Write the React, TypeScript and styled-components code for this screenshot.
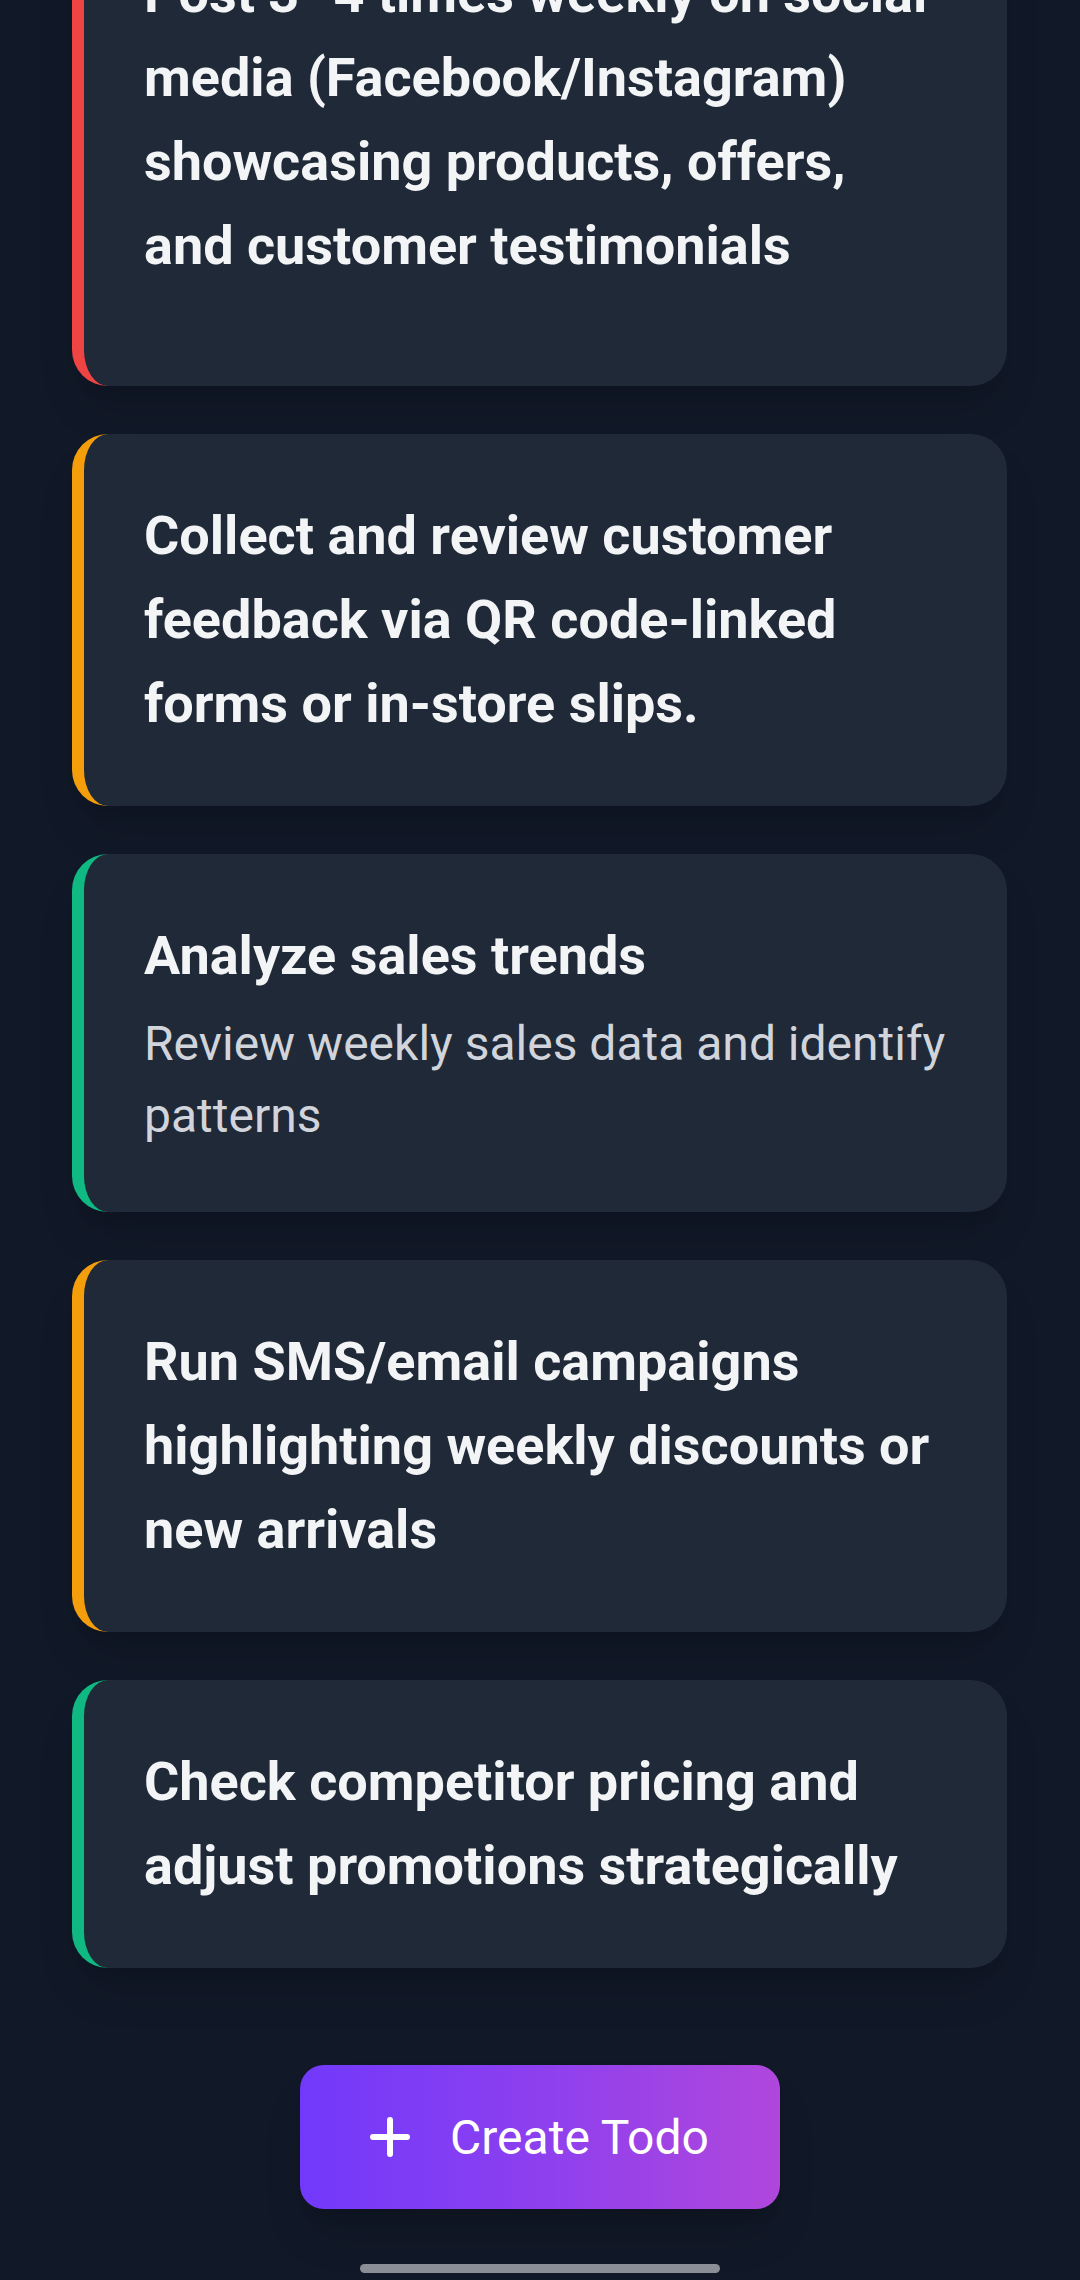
import React from "react";
import styled, { createGlobalStyle } from "styled-components";

const GlobalStyle = createGlobalStyle`
  html, body {
    margin: 0;
    padding: 0;
    background: #111827;
  }
  body {
    font-family: Roboto, "Noto Sans", "Liberation Sans", sans-serif;
    -webkit-font-smoothing: antialiased;
  }
  * { box-sizing: border-box; }
`;

const Page = styled.div`
  min-height: 100vh;
  background: #111827;
  overflow: hidden;
  padding: 0 73px 0 72px;
  display: flex;
  flex-direction: column;
  align-items: stretch;
`;

/* the list is scrolled: its first card begins above the viewport */
const List = styled.div`
  margin-top: -108px;
  display: flex;
  flex-direction: column;
  gap: 48px;
`;

type Accent = "red" | "amber" | "green";
const accentColor: Record<Accent, string> = {
  red: "#ef4444",
  amber: "#f59e0b",
  green: "#10b981",
};

const Card = styled.div<{ $accent: Accent; $extra?: number }>`
  background: #1f2937;
  border-left: 12px solid ${(p) => accentColor[p.$accent]};
  border-radius: 36px;
  padding: 60px 60px ${(p) => 60 + (p.$extra ?? 0)}px 60px;
  box-shadow: 0 30px 45px -9px rgba(0, 0, 0, 0.12),
    0 12px 18px -12px rgba(0, 0, 0, 0.12);
  display: flex;
  flex-direction: column;
`;

const Title = styled.h3`
  margin: 0;
  font-size: 54px;
  line-height: 84px;
  font-weight: 700;
  color: #f3f4f6;
`;

const Description = styled.p`
  margin: 10px 0 0 0;
  font-size: 48px;
  line-height: 72px;
  font-weight: 400;
  color: #d1d5db;
`;

const Footer = styled.div`
  display: flex;
  justify-content: center;
  padding: 97px 0 72px;
`;

const CreateButton = styled.button`
  display: flex;
  align-items: center;
  justify-content: center;
  gap: 40px;
  width: 480px;
  height: 144px;
  border: none;
  border-radius: 24px;
  background: linear-gradient(90deg, #7239fb 0%, #8a3ff0 45%, #b047dc 100%);
  color: #ffffff;
  font-family: Roboto, "Noto Sans", "Liberation Sans", sans-serif;
  font-size: 48px;
  font-weight: 400;
  box-shadow: 0 30px 45px -9px rgba(0, 0, 0, 0.15),
    0 12px 18px -12px rgba(0, 0, 0, 0.15);
  cursor: pointer;
`;

const HomeIndicator = styled.div`
  position: fixed;
  left: 50%;
  bottom: 7px;
  transform: translateX(-50%);
  width: 360px;
  height: 9px;
  border-radius: 5px;
  background: #8b8e97;
`;

const PlusIcon = () => (
  <svg width="40" height="40" viewBox="0 0 40 40" fill="none">
    <path
      d="M20 3v34M3 20h34"
      stroke="#ffffff"
      strokeWidth="6"
      strokeLinecap="round"
    />
  </svg>
);

type Todo = {
  title: string;
  description?: string;
  accent: Accent;
  extra?: number;
};

const todos: Todo[] = [
  {
    title:
      "Post 3–4 times weekly on social media (Facebook/Instagram) showcasing products, offers, and customer testimonials",
    accent: "red",
    extra: 38,
  },
  {
    title:
      "Collect and review customer feedback via QR code-linked forms or in-store slips.",
    accent: "amber",
  },
  {
    title: "Analyze sales trends",
    description: "Review weekly sales data and identify patterns",
    accent: "green",
  },
  {
    title:
      "Run SMS/email campaigns highlighting weekly discounts or new arrivals",
    accent: "amber",
  },
  {
    title: "Check competitor pricing and adjust promotions strategically",
    accent: "green",
  },
];

export default function App() {
  return (
    <>
      <GlobalStyle />
      <Page>
        <List>
          {todos.map((t, i) => (
            <Card key={i} $accent={t.accent} $extra={t.extra}>
              <Title>{t.title}</Title>
              {t.description && <Description>{t.description}</Description>}
            </Card>
          ))}
        </List>
        <Footer>
          <CreateButton>
            <PlusIcon />
            <span>Create Todo</span>
          </CreateButton>
        </Footer>
      </Page>
      <HomeIndicator />
    </>
  );
}
